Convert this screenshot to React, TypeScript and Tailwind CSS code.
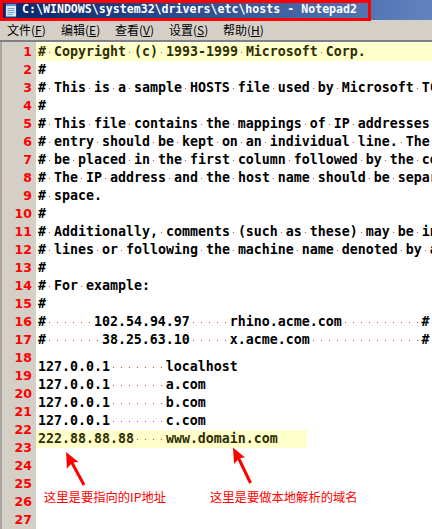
import React from "react"

const mono = { fontFamily: '"DejaVu Sans Mono", "Liberation Mono", monospace' }
const cjk = { fontFamily: '"Noto Sans CJK SC", "Noto Sans", sans-serif' }

const top = [
  "# Copyright (c) 1993-1999 Microsoft Corp.",
  "#",
  "# This is a sample HOSTS file used by Microsoft TCP/IP for Windows.",
  "#",
  "# This file contains the mappings of IP addresses to host names. Each",
  "# entry should be kept on an individual line. The IP address should",
  "# be placed in the first column followed by the corresponding host name.",
  "# The IP address and the host name should be separated by at least one",
  "# space.",
  "#",
  "# Additionally, comments (such as these) may be inserted on individual",
  "# lines or following the machine name denoted by a '#' symbol.",
  "#",
  "# For example:",
  "#",
  "#      102.54.94.97     rhino.acme.com          # source server",
  "#       38.25.63.10     x.acme.com              # x client host",
]

const hosts = [
  "127.0.0.1       localhost",
  "127.0.0.1       a.com",
  "127.0.0.1       b.com",
  "127.0.0.1       c.com",
]

const menus = [
  ["文件", "F"],
  ["编辑", "E"],
  ["查看", "V"],
  ["设置", "S"],
  ["帮助", "H"],
]

// spaces shown as small red dots, like Notepad2's visible whitespace
function Line({ text }: { text: string }) {
  return (
    <>
      {text.split(/( )/).map((p, i) =>
        p === " " ? (
          <span key={i} className="inline-flex w-[1ch] h-[18px] align-top items-center justify-center">
            <span className="w-[1px] h-[1px] bg-[#f04020]" />
          </span>
        ) : (
          <span key={i}>{p}</span>
        )
      )}
    </>
  )
}

function NoteIcon() {
  return (
    <svg width="16" height="16" viewBox="0 0 16 16">
      <rect x="2.5" y="1.5" width="11" height="13.5" fill="#d8ecfc" stroke="#1c3f7c" />
      <rect x="3" y="2" width="10" height="2" fill="#5d8fd8" />
      <line x1="4.5" y1="6.5" x2="11.5" y2="6.5" stroke="#7aa3dc" />
      <line x1="4.5" y1="8.5" x2="11.5" y2="8.5" stroke="#7aa3dc" />
      <line x1="4.5" y1="10.5" x2="11.5" y2="10.5" stroke="#7aa3dc" />
      <line x1="4.5" y1="12.5" x2="9.5" y2="12.5" stroke="#7aa3dc" />
    </svg>
  )
}

export default function App() {
  return (
    <div className="relative w-[432px] h-[529px] overflow-hidden bg-white">
      {/* title bar */}
      <div className="h-[20px] flex items-center pl-[3px] bg-gradient-to-r from-[#0a246a] to-[#6283c0]">
        <NoteIcon />
        <span
          className="ml-[3px] text-white font-bold text-[11.6px] whitespace-pre leading-none"
          style={mono}
        >
          C:\WINDOWS\system32\drivers\etc\hosts - Notepad2
        </span>
      </div>

      {/* menu */}
      <div className="h-[20px] flex items-center pl-[7px] bg-[#d4d0c8] text-[12px] text-black" style={cjk}>
        {menus.map(([label, key]) => (
          <div key={key} className="w-[54px] whitespace-pre leading-none">
            {label}(<span className="underline">{key}</span>)
          </div>
        ))}
      </div>

      {/* editor */}
      <div className="flex border-t-2 border-[#808080] h-[489px]">
        <div
          className="w-[36px] shrink-0 bg-[#d4d0c8] border-l-2 border-[#a9a59c] flex flex-col items-end pr-[4px] pt-[1px] text-[#ff0000] font-bold text-[12.5px]"
          style={{ fontFamily: '"DejaVu Sans", Verdana, sans-serif' }}
        >
          {Array.from({ length: 27 }, (_, i) => (
            <div key={i} className="h-[18px] leading-[18px]">
              {i + 1}
            </div>
          ))}
        </div>

        <div className="flex-1 min-w-0 pt-[1px] text-[13.29px] font-bold text-black whitespace-pre overflow-hidden" style={mono}>
          {top.map((t, i) => (
            <div
              key={i}
              className={
                "h-[18px] leading-[18px] pl-[2px] " +
                (i === 0 ? "bg-[#ffffcc] text-[#2e2e00]" : "")
              }
            >
              <Line text={t} />
            </div>
          ))}
          <div className="h-[9px]" />
          {hosts.map((t, i) => (
            <div key={i} className="h-[18px] leading-[18px] pl-[2px]">
              <Line text={t} />
            </div>
          ))}
          <div className="h-[18px] leading-[18px] pl-[2px] w-[271px] bg-[#ffffcc] text-[#2e2e00]">
            <Line text="222.88.88.88    www.domain.com" />
          </div>
        </div>
      </div>

      {/* screenshot annotations */}
      <div className="absolute left-0 top-0 w-[371px] h-[21px] border-[3px] border-[#ff0000]" />
      <svg className="absolute left-0 top-0" width="432" height="529">
        <line x1="84" y1="485" x2="71" y2="461" stroke="#ff0000" strokeWidth="3" />
        <polygon points="66,452 78.5,462 72.5,462.5 67,468.5" fill="#ff0000" />
        <line x1="250.5" y1="483" x2="238" y2="457" stroke="#ff0000" strokeWidth="3" />
        <polygon points="233,447.5 245,457.5 239.5,458 234,464" fill="#ff0000" />
      </svg>
      <div
        className="absolute left-[44px] top-[489px] text-[12.3px] leading-[16px] text-[#ff0000] whitespace-pre"
        style={cjk}
      >
        这里是要指向的IP地址
      </div>
      <div
        className="absolute left-[210px] top-[489px] text-[12.3px] leading-[16px] text-[#ff0000] whitespace-pre"
        style={cjk}
      >
        这里是要做本地解析的域名
      </div>
    </div>
  )
}
